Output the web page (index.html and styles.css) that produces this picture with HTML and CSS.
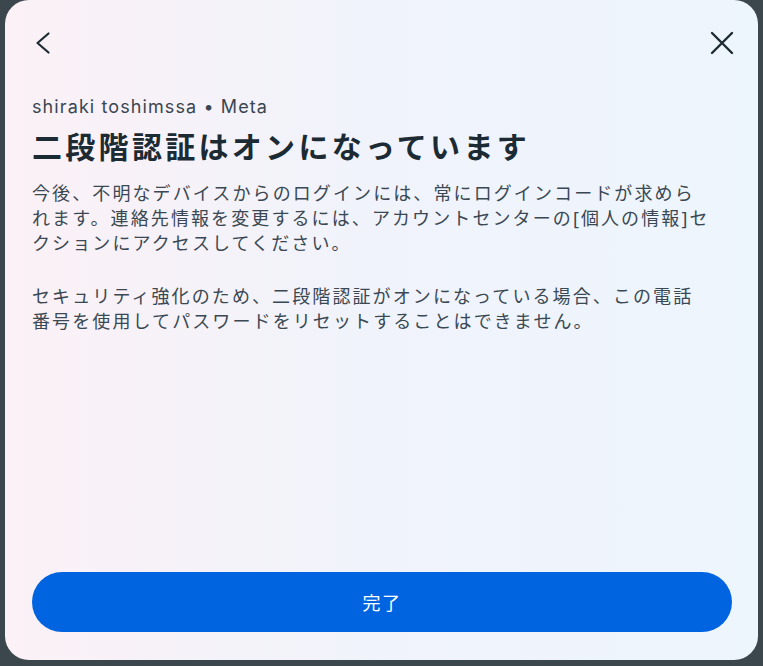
FILE: index.html
```html
<!DOCTYPE html>
<html lang="ja">

<head>
    <meta charset="UTF-8">
    <title>二段階認証</title>
    <link rel="stylesheet" href="styles.css">
</head>

<body>
    <div class="dialog">
        <div class="head">
            <svg class="icon" viewBox="0 0 24 24" width="24" height="24">
                <path d="M16.5 2.5 L5.5 12 L16.5 21.5" fill="none" stroke="#1c2b33" stroke-width="2.2" stroke-linecap="round" stroke-linejoin="round"/>
            </svg>
            <svg class="icon" viewBox="0 0 24 24" width="24" height="24">
                <path d="M2 2 L22 22 M22 2 L2 22" fill="none" stroke="#1c2b33" stroke-width="2.4" stroke-linecap="round"/>
            </svg>
        </div>

        <p class="account">shiraki toshimssa • Meta</p>
        <h1>二段階認証はオンになっています</h1>
        <p class="txt">今後、不明なデバイスからのログインには、常にログインコードが求めら<br>れます。連絡先情報を変更するには、アカウントセンターの[個人の情報]セ<br>クションにアクセスしてください。</p>
        <p class="txt second">セキュリティ強化のため、二段階認証がオンになっている場合、この電話<br>番号を使用してパスワードをリセットすることはできません。</p>

        <button class="done">完了</button>
    </div>
</body>

</html>
```

FILE: styles.css
```css
* {
    padding: 0;
    margin: 0;
    box-sizing: border-box;
}

body {
    background: #3c464d;
    font-family: "Noto Sans", "Noto Sans CJK JP", sans-serif;
    height: 666px;
    overflow: hidden;
}

.dialog {
    width: 753px;
    height: 660px;
    margin-left: 5px;
    border-radius: 24px;
    background: linear-gradient(90deg, #fbf1f6 0%, #f1f3fb 45%, #edf5fd 100%);
    display: flex;
    flex-direction: column;
    padding: 31px 24px 28px 27px;
}

.head {
    display: flex;
    justify-content: space-between;
    height: 24px;
    margin-bottom: 40px;
}

.icon {
    display: block;
}

.account {
    font-family: "Inter", "Noto Sans", sans-serif;
    font-size: 18px;
    line-height: 24px;
    letter-spacing: 1.1px;
    color: #3a4650;
}

h1 {
    margin-top: 9px;
    font-size: 30px;
    line-height: 38px;
    letter-spacing: 3.3px;
    color: #1c2b33;
    font-weight: 700;
}

.txt {
    margin-top: 15px;
    font-size: 18px;
    line-height: 25px;
    letter-spacing: 2.1px;
    white-space: nowrap;
    color: #3a4853;
}

.txt.second {
    margin-top: 28px;
}

.done {
    margin-top: auto;
    width: 700px;
    height: 60px;
    border: none;
    border-radius: 30px;
    background: #0064e0;
    color: #fff;
    font-family: "Noto Sans CJK JP", sans-serif;
    font-size: 18px;
    letter-spacing: 1.5px;
}
```
